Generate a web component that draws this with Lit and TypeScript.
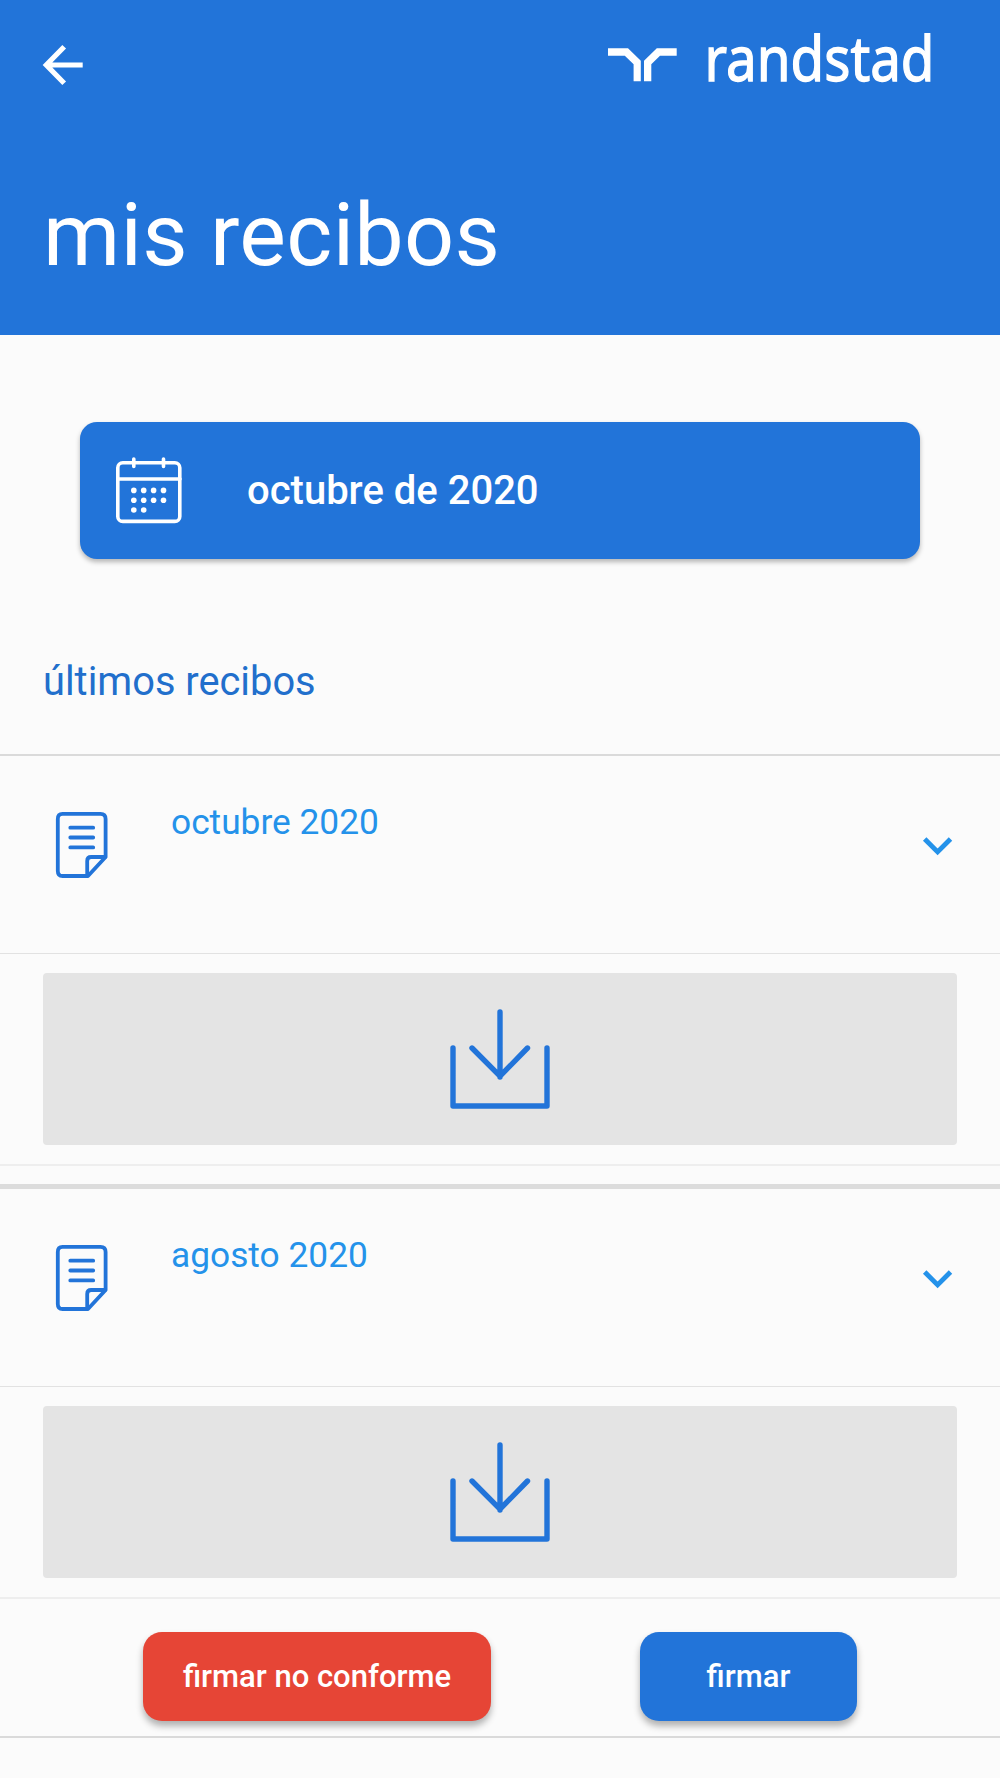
import { LitElement, html, css, svg } from "lit";
import { customElement, property } from "lit/decorators.js";

@customElement("receipt-row")
class ReceiptRow extends LitElement {
  @property() label = "";

  static styles = css`
    :host { display: block; }
    .head {
      display: flex;
      align-items: flex-start;
      height: 198px;
      box-sizing: border-box;
      padding: 45px 43px 0 52px;
      border-bottom: 1px solid #e2e2e2;
    }
    .doc { width: 60px; height: 72px; flex: none; margin-top: 7px; }
    .label {
      flex: 1;
      margin-left: 59px;
      font-size: 35.3px;
      line-height: 42px;
      color: #2492ea;
      white-space: nowrap;
    }
    .chev { width: 40px; height: 30px; flex: none; margin-top: 28px; }
    .body { padding: 19px 43px; border-bottom: 2px solid #eeeeee; }
    .download {
      display: flex;
      justify-content: center;
      width: 100%;
      height: 172px;
      padding: 0;
      border: 0;
      border-radius: 4px;
      background: #e4e4e4;
    }
    .download svg { width: 160px; height: 172px; }
  `;

  render() {
    return html`
      <div class="head">
        <svg class="doc" viewBox="0 0 60 72" fill="none" stroke="#2274d9" stroke-width="3.8" stroke-linejoin="round" stroke-linecap="round">
          <path d="M10.5 5.8H48.5Q53.6 5.8 53.6 11V49L36 68H10.5Q5.8 68 5.8 63V11Q5.8 5.8 10.5 5.8Z" />
          <path d="M35.2 67V53Q35.2 49 39.2 49H53" />
          <path d="M18.3 19.7H41.2M18.3 29.5H41.2M18.3 39.4H41.2" />
        </svg>
        <div class="label">${this.label}</div>
        <svg class="chev" viewBox="0 0 40 30" fill="none" stroke="#2492ea" stroke-width="4.9">
          <path d="M7.7 10L20.6 22.9L33.5 10" />
        </svg>
      </div>
      <div class="body">
        <button class="download" aria-label="descargar">
          <svg viewBox="0 0 160 172" fill="none" stroke="#2274d9" stroke-width="5.4" stroke-linecap="round" stroke-linejoin="round">
            <path d="M80 39V104M52 75L80 103.2L107.5 75M33 75V133H127V75" />
          </svg>
        </button>
      </div>
    `;
  }
}

@customElement("app-root")
class AppRoot extends LitElement {
  static styles = css`
    :host {
      display: block;
      width: 1000px;
      height: 1778px;
      overflow: hidden;
      background: #fbfbfb;
      font-family: Roboto, sans-serif;
    }
    header {
      height: 335px;
      box-sizing: border-box;
      background: #2274d9;
      color: #fff;
    }
    .bar {
      display: flex;
      justify-content: space-between;
      padding: 0 60px 0 33px;
      height: 100px;
    }
    .back { width: 60px; height: 60px; margin-top: 35px; }
    .logo { width: 350px; height: 100px; overflow: visible; }
    .logo text { font-family: "Noto Sans", "Open Sans", sans-serif; font-size: 62px; }
    h1 {
      margin: 85px 0 0 43px;
      font-size: 88px;
      letter-spacing: 0.3px;
      line-height: 100px;
      font-weight: 400;
    }
    .month {
      display: flex;
      align-items: center;
      margin: 87px 80px 0;
      height: 137px;
      border-radius: 17px;
      background: #2274d9;
      color: #fff;
      box-shadow: 0 3px 5px rgba(0, 0, 0, 0.28);
      font-size: 40px;
      font-weight: 500;
    }
    .month svg { width: 72px; height: 72px; margin: 0 62px 0 33px; }
    h2 {
      margin: 96px 0 0 43px;
      height: 99px;
      font-size: 39.8px;
      line-height: 54px;
      font-weight: 400;
      color: #216fcc;
    }
    .list { border-top: 2px solid #dadada; }
    .sep { margin-top: 18px; height: 5px; background: #dcdcdc; }
    .actions {
      display: flex;
      gap: 149px;
      height: 104px;
      padding: 33px 143px 0;
      border-bottom: 2px solid #dadada;
    }
    .btn {
      height: 89px;
      padding: 1px 0 0;
      border: 0;
      border-radius: 19px;
      color: #fff;
      font: 500 31px/88px Roboto, sans-serif;
      box-shadow: 0 5px 7px rgba(0, 0, 0, 0.3);
    }
    .no { width: 348px; background: #e64536; }
    .yes { width: 217px; background: #2274d9; }
  `;

  private dots() {
    const rows = [4, 4, 2];
    return rows.flatMap((n, r) =>
      Array.from({ length: n }, (_, c) => svg`<circle cx=${20.8 + c * 9.9} cy=${35.4 + r * 9.8} r="2.8"></circle>`)
    );
  }

  render() {
    return html`
      <header>
        <div class="bar">
          <svg class="back" viewBox="0 0 60 60" fill="none" stroke="#fff" stroke-width="5.2">
            <path d="M49.7 30H15M31.2 11.8L13.3 30L31.2 48.2" />
          </svg>
          <svg class="logo" viewBox="590 0 350 100" fill="#fff">
            <path d="M608 48.3H628L640.8 60.7V81.3H633.6V64.3L624.8 55.7H608Z" />
            <path d="M676.7 48.3H656.8L644 60.7V81.3H651.3V64.3L660 55.7H676.7Z" />
            <text x="704.5" y="81" textLength="230" lengthAdjust="spacingAndGlyphs" stroke="#fff" stroke-width="1.3">randstad</text>
          </svg>
        </div>
        <h1>mis recibos</h1>
      </header>
      <div class="month">
        <svg viewBox="0 0 72 72" fill="none" stroke="#fff" stroke-width="3.6" stroke-linecap="round">
          <rect x="4.8" y="7.8" width="62" height="58.6" rx="5" />
          <path d="M5 24H67M20.8 4V11.5M50.5 4V11.5" />
          <g fill="#fff" stroke="none">${this.dots()}</g>
        </svg>
        <span>octubre de 2020</span>
      </div>
      <h2>últimos recibos</h2>
      <div class="list">
        <receipt-row label="octubre 2020"></receipt-row>
        <div class="sep"></div>
        <receipt-row label="agosto 2020"></receipt-row>
        <div class="actions">
          <button class="btn no">firmar no conforme</button>
          <button class="btn yes">firmar</button>
        </div>
      </div>
    `;
  }
}
